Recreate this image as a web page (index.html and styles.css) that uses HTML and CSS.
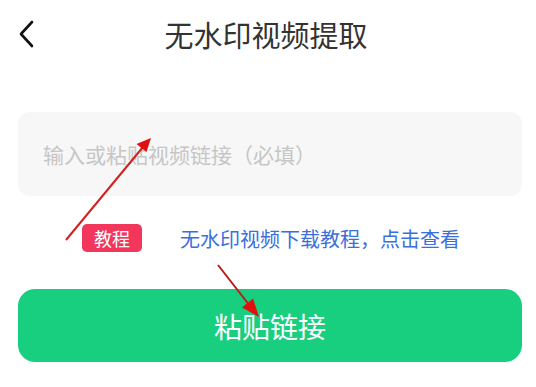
FILE: index.html
```html
<!DOCTYPE html>
<html lang="zh-CN">
<head>
    <meta charset="utf-8"/>
    <meta name="viewport" content="width=device-width, initial-scale=1.0">
    <title>无水印视频提取</title>
    <link rel="stylesheet" href="styles.css">
</head>
<body>
    <div class="page">
        <div class="header">
            <svg class="back-btn" width="16" height="28" viewBox="0 0 16 28">
                <polyline points="14,2 3,14 14,26" fill="none" stroke="#111" stroke-width="2.6" stroke-linecap="round" stroke-linejoin="round"/>
            </svg>
            <h1 class="title">无水印视频提取</h1>
        </div>

        <div class="link-box">
            <input type="text" class="link-input" placeholder="输入或粘贴视频链接（必填）">
        </div>

        <div class="tutorial-row">
            <span class="badge">教程</span>
            <a class="tutorial-link" href="#">无水印视频下载教程，点击查看</a>
        </div>

        <button class="paste-btn">粘贴链接</button>

        <!-- annotation arrows drawn over the screenshot -->
        <svg class="arrows" width="536" height="387" viewBox="0 0 536 387">
            <line x1="66" y1="240" x2="143" y2="147" stroke="#d31f1f" stroke-width="2"/>
            <polygon points="151,138 146.5,152 136.5,144" fill="#e01010"/>
            <line x1="218" y1="265" x2="250" y2="306" stroke="#b81c1c" stroke-width="2"/>
            <polygon points="259,317 253,298.5 242,307.5" fill="#e01010"/>
        </svg>
    </div>
</body>
</html>
```

FILE: styles.css
```css
body {
    margin: 0;
    background-color: #ffffff;
    font-family: "Noto Sans CJK SC", "Noto Sans", sans-serif;
}

.page {
    position: relative;
    padding: 0 14px 0 18px;
    height: 387px;
}

.header {
    height: 68px;
    display: flex;
    align-items: center;
    position: relative;
}

.back-btn {
    display: block;
}

.title {
    position: absolute;
    left: 0;
    right: 0;
    margin: 0;
    text-align: center;
    font-size: 29px;
    font-weight: 400;
    color: #333333;
    pointer-events: none;
    padding-right: 8px;
}

.link-box {
    margin-top: 44px;
    height: 84px;
    background-color: #f7f7f7;
    border-radius: 12px;
    display: flex;
    align-items: center;
    padding: 0 25px;
}

.link-input {
    width: 100%;
    border: none;
    outline: none;
    background: transparent;
    font-family: inherit;
    font-size: 21px;
    color: #333;
    padding: 0;
}

.link-input::placeholder {
    color: #c6c6c6;
}

.tutorial-row {
    margin-top: 28px;
    display: flex;
    align-items: center;
    gap: 38px;
    padding-left: 64px;
    height: 28px;
}

.badge {
    width: 60px;
    height: 28px;
    border-radius: 5px;
    background-color: #f3375c;
    color: #ffffff;
    font-size: 18px;
    line-height: 28px;
    text-align: center;
}

.tutorial-link {
    color: #3a6fdc;
    font-size: 20px;
    text-decoration: none;
}

.paste-btn {
    display: block;
    margin-top: 37px;
    width: 100%;
    height: 73px;
    border: none;
    border-radius: 17px;
    background-color: #18cf80;
    color: #ffffff;
    font-family: inherit;
    font-size: 28px;
    cursor: pointer;
}

.arrows {
    position: absolute;
    left: 0;
    top: 0;
    pointer-events: none;
}
```
